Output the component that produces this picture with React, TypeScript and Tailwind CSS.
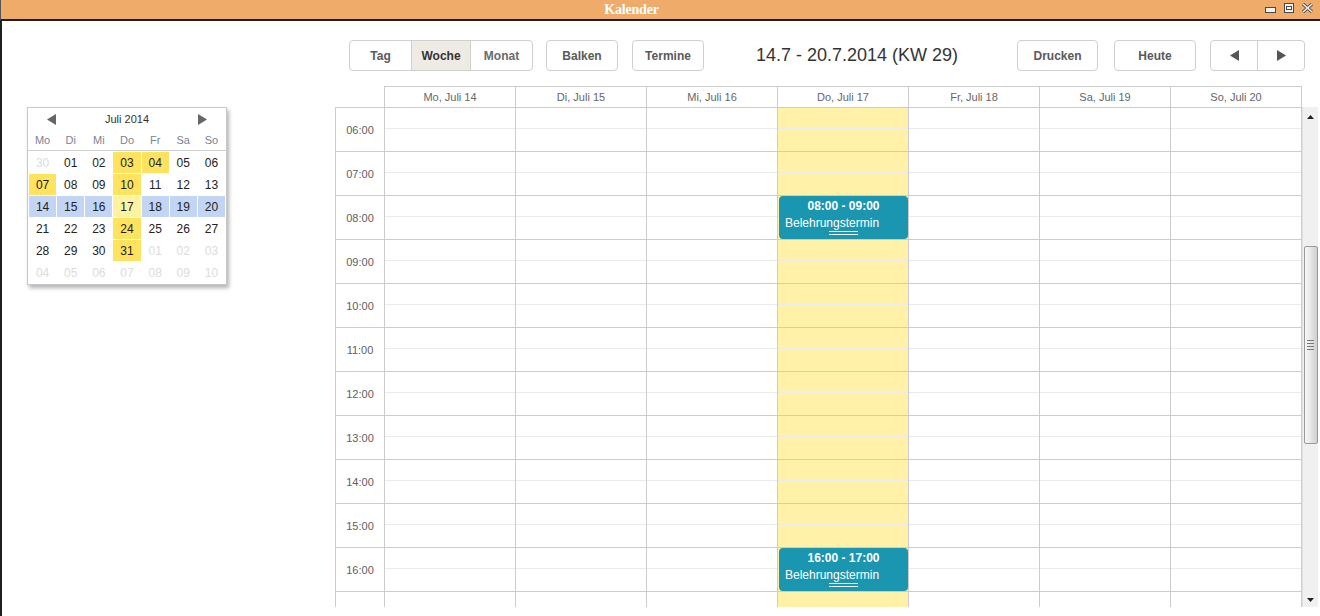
import React from 'react';

const days = ['Mo, Juli 14', 'Di, Juli 15', 'Mi, Juli 16', 'Do, Juli 17', 'Fr, Juli 18', 'Sa, Juli 19', 'So, Juli 20'];
const hours = ['06:00', '07:00', '08:00', '09:00', '10:00', '11:00', '12:00', '13:00', '14:00', '15:00', '16:00', ''];

// g = anderer Monat, y = Termin, l = heute, b = gewählte Woche
type Cell = [string, '' | 'g' | 'y' | 'l' | 'b'];
const month: Cell[][] = [
  [['30', 'g'], ['01', ''], ['02', ''], ['03', 'y'], ['04', 'y'], ['05', ''], ['06', '']],
  [['07', 'y'], ['08', ''], ['09', ''], ['10', 'y'], ['11', ''], ['12', ''], ['13', '']],
  [['14', 'b'], ['15', 'b'], ['16', 'b'], ['17', 'l'], ['18', 'b'], ['19', 'b'], ['20', 'b']],
  [['21', ''], ['22', ''], ['23', ''], ['24', 'y'], ['25', ''], ['26', ''], ['27', '']],
  [['28', ''], ['29', ''], ['30', ''], ['31', 'y'], ['01', 'g'], ['02', 'g'], ['03', 'g']],
  [['04', 'g'], ['05', 'g'], ['06', 'g'], ['07', 'g'], ['08', 'g'], ['09', 'g'], ['10', 'g']],
];

const cellClass: Record<string, string> = {
  '': 'text-[#222]',
  g: 'text-[#dcdcdc]',
  y: 'bg-[#ffe35f] text-[#222]',
  l: 'bg-[#fff3a3] text-[#222]',
  b: 'bg-[#c3d5f5] text-[#222]',
};

function Triangle({ dir, className }: { dir: 'left' | 'right'; className?: string }) {
  return (
    <svg width="9" height="11" viewBox="0 0 9 11" className={className}>
      {dir === 'left' ? <path d="M9 0 L9 11 L0 5.5 Z" fill="currentColor" /> : <path d="M0 0 L0 11 L9 5.5 Z" fill="currentColor" />}
    </svg>
  );
}

function MiniCalendar() {
  return (
    <div className="w-[200px] border border-[#c8c8c8] bg-white shadow-[2px_3px_4px_rgba(0,0,0,0.3)]">
      <div className="h-[22px] flex items-center justify-between px-[19px] text-[#666]">
        <Triangle dir="left" />
        <span className="text-[11px] text-[#333]">Juli 2014</span>
        <Triangle dir="right" />
      </div>
      <div className="h-[21px] grid grid-cols-7 gap-[1px] px-[1px] border-b border-[#d0d0d0] text-[11px] text-[#7a8494] items-center">
        {['Mo', 'Di', 'Mi', 'Do', 'Fr', 'Sa', 'So'].map(d => (
          <span key={d} className="text-center">{d}</span>
        ))}
      </div>
      <div className="grid grid-cols-7 gap-[1px] p-[1px]">
        {month.flat().map(([n, k], i) => (
          <div key={i} className={`h-[21px] flex items-center justify-center text-[12px] ${cellClass[k]}`}>{n}</div>
        ))}
      </div>
    </div>
  );
}

function Btn({ children, w }: { children: React.ReactNode; w: string }) {
  return (
    <div className={`${w} h-[31px] flex items-center justify-center border border-[#cfcfcf] rounded-[4px] bg-white text-[12px] font-bold text-[#5a5a5a]`}>
      {children}
    </div>
  );
}

function Event({ time }: { time: string }) {
  return (
    <div className="absolute left-[1px] right-0 top-0 h-[43px] rounded-[4px] bg-[#1a96b0] text-white text-[12px] leading-[14px] z-10">
      <div className="pt-[3px] font-bold text-center">{time}</div>
      <div className="pt-[3px] pl-[6px]">Belehrungstermin</div>
      <div className="mx-auto mt-[1px] w-[29px] h-[4px] border-t border-b border-white" />
    </div>
  );
}

function WindowIcons() {
  return (
    <div className="absolute right-[7px] top-[3px] flex items-end gap-[8px]">
      <svg width="11" height="6" viewBox="0 0 11 6">
        <rect x="0.5" y="0.5" width="10" height="5" fill="#f2f2f2" stroke="#4a4a4a" />
      </svg>
      <svg width="10" height="10" viewBox="0 0 10 10">
        <rect x="0.5" y="0.5" width="9" height="9" fill="#f2f2f2" stroke="#4a4a4a" />
        <rect x="2.5" y="3.5" width="5" height="3" fill="none" stroke="#4a4a4a" />
      </svg>
      <svg width="11" height="10" viewBox="0 0 11 10">
        <path d="M1 1 L10 9 M10 1 L1 9" stroke="#4a4a4a" strokeWidth="3.2" />
        <path d="M1 1 L10 9 M10 1 L1 9" stroke="#f2f2f2" strokeWidth="1.6" />
      </svg>
    </div>
  );
}

function Scrollbar() {
  return (
    <div className="w-[16px] h-[500px] bg-[#f0f0f0] border-l border-[#e2e2e2] flex flex-col items-center">
      <svg width="7" height="4" viewBox="0 0 7 4" className="mt-[8px]">
        <path d="M0 4 L7 4 L3.5 0 Z" fill="#222" />
      </svg>
      <div className="mt-[127px] w-[14px] h-[198px] rounded-[2px] border border-[#9a9a9a] bg-gradient-to-r from-[#f7f7f7] via-[#e6e6e6] to-[#cfcfcf] flex flex-col items-center justify-center gap-[2px]">
        <div className="w-[7px] h-[1px] bg-[#777]" />
        <div className="w-[7px] h-[1px] bg-[#777]" />
        <div className="w-[7px] h-[1px] bg-[#777]" />
        <div className="w-[7px] h-[1px] bg-[#777]" />
      </div>
      <svg width="7" height="4" viewBox="0 0 7 4" className="mt-auto mb-[5px]">
        <path d="M0 0 L7 0 L3.5 4 Z" fill="#222" />
      </svg>
    </div>
  );
}

export default function App() {
  return (
    <div className="w-[1320px] h-[616px] overflow-hidden bg-white font-['Liberation_Sans',Arial,sans-serif]">
      <div className="relative h-[21px] bg-[#efab6a] border-b-2 border-[#1e1e1e] border-l border-l-[#555] flex items-center justify-center pr-[58px]">
        <span className="font-['Liberation_Serif',serif] font-bold text-[14px] text-white tracking-[-0.2px]">Kalender</span>
        <WindowIcons />
      </div>
      <div className="flex h-[595px] border-l-2 border-[#1e1e1e]">
        <div className="w-[333px] shrink-0 pl-[25px] pt-[86px]">
          <MiniCalendar />
        </div>
        <div className="flex-1 flex flex-col">
          <div className="flex items-center pl-[14px] pr-[15px] mt-[19px]">
            <div className="flex h-[31px] border border-[#cfcfcf] rounded-[4px] overflow-hidden text-[12px] font-bold">
              <div className="w-[61px] flex items-center justify-center text-[#5a5a5a]">Tag</div>
              <div className="w-[60px] flex items-center justify-center bg-[#efebe4] text-[#333] border-l border-r border-[#cfcfcf]">Woche</div>
              <div className="w-[61px] flex items-center justify-center text-[#6a6a6a]">Monat</div>
            </div>
            <div className="ml-[13px]"><Btn w="w-[72px]">Balken</Btn></div>
            <div className="ml-[14px]"><Btn w="w-[72px]">Termine</Btn></div>
            <div className="flex-1 text-center text-[18px] text-[#333] pr-[7px]">14.7 - 20.7.2014 (KW 29)</div>
            <Btn w="w-[81px]">Drucken</Btn>
            <div className="ml-[16px]"><Btn w="w-[82px]">Heute</Btn></div>
            <div className="ml-[14px] flex h-[31px] border border-[#cfcfcf] rounded-[4px] text-[#555]">
              <div className="w-[47px] flex items-center justify-center border-r border-[#cfcfcf]"><Triangle dir="left" /></div>
              <div className="w-[46px] flex items-center justify-center"><Triangle dir="right" /></div>
            </div>
          </div>

          <div className="mt-[15px] w-[967px] grid grid-cols-[49px_repeat(7,1fr)] border-r border-[#cccccc]">
            <div />
            {days.map(d => (
              <div key={d} className="h-[21px] border-t border-l border-[#cccccc] flex items-center justify-center text-[11px] text-[#666]">{d}</div>
            ))}
          </div>

          <div className="flex">
            <div className="w-[967px] h-[500px] overflow-hidden border-t border-l border-r border-[#cccccc]">
              {hours.map((h, r) => (
                <div key={r} className="grid grid-cols-[48px_repeat(7,1fr)] h-[44px] border-b border-[#cccccc]">
                  <div className="flex items-center justify-center pt-[1px] text-[11px] text-[#606060]">{h}</div>
                  {days.map((d, i) => (
                    <div key={d} className={`relative border-l border-[#cccccc] ${i === 3 ? 'bg-[#fff2a8]' : ''}`}>
                      <div className="h-[21px] border-b border-[#ebebeb]" />
                      {i === 3 && h === '08:00' && <Event time="08:00 - 09:00" />}
                      {i === 3 && h === '16:00' && <Event time="16:00 - 17:00" />}
                    </div>
                  ))}
                </div>
              ))}
            </div>
            <Scrollbar />
          </div>
        </div>
      </div>
    </div>
  );
}
